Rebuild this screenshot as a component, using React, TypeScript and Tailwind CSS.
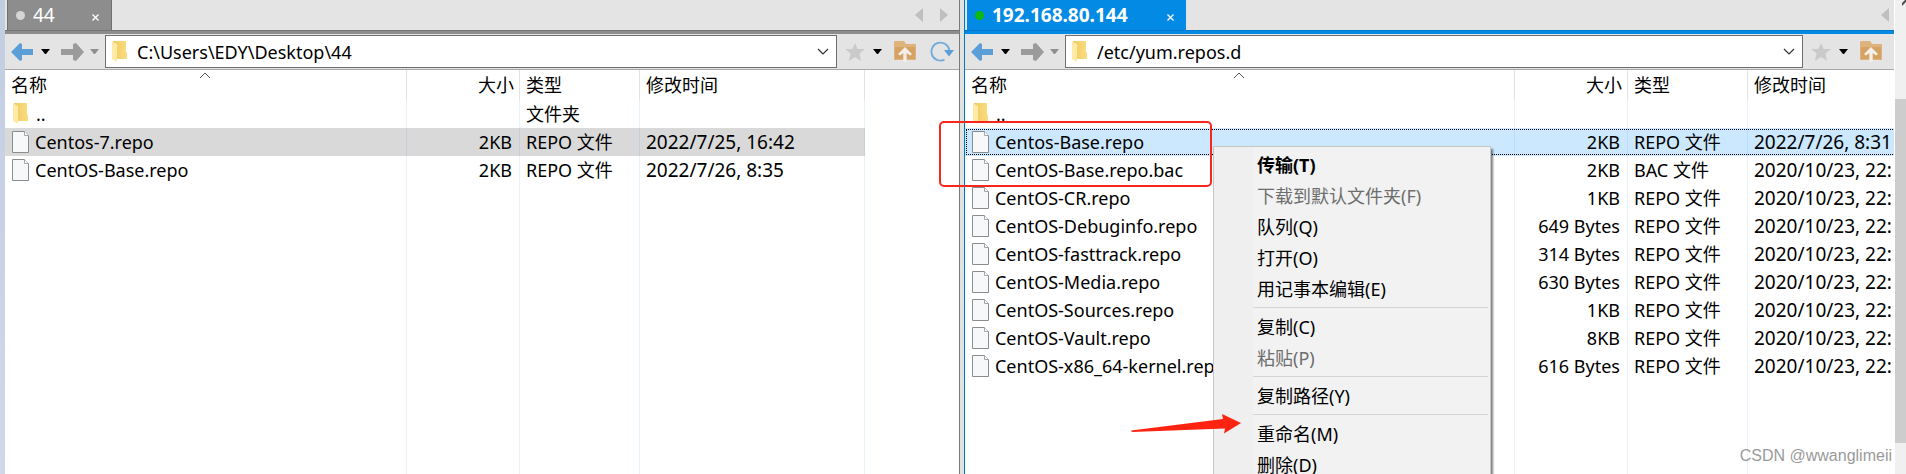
import React from "react";

type FileRow = { name: string; size: string; ext: string; date: string };

const localFiles: FileRow[] = [
  { name: "Centos-7.repo", size: "2KB", ext: "REPO", date: "2022/7/25, 16:42" },
  { name: "CentOS-Base.repo", size: "2KB", ext: "REPO", date: "2022/7/26, 8:35" },
];

const remoteFiles: FileRow[] = [
  { name: "Centos-Base.repo", size: "2KB", ext: "REPO", date: "2022/7/26, 8:31" },
  { name: "CentOS-Base.repo.bac", size: "2KB", ext: "BAC", date: "2020/10/23, 22:" },
  { name: "CentOS-CR.repo", size: "1KB", ext: "REPO", date: "2020/10/23, 22:" },
  { name: "CentOS-Debuginfo.repo", size: "649 Bytes", ext: "REPO", date: "2020/10/23, 22:" },
  { name: "CentOS-fasttrack.repo", size: "314 Bytes", ext: "REPO", date: "2020/10/23, 22:" },
  { name: "CentOS-Media.repo", size: "630 Bytes", ext: "REPO", date: "2020/10/23, 22:" },
  { name: "CentOS-Sources.repo", size: "1KB", ext: "REPO", date: "2020/10/23, 22:" },
  { name: "CentOS-Vault.repo", size: "8KB", ext: "REPO", date: "2020/10/23, 22:" },
  { name: "CentOS-x86_64-kernel.repo", size: "616 Bytes", ext: "REPO", date: "2020/10/23, 22:" },
];

const menuGroups = [
  [
    { label: "传输", hot: "T", bold: true },
    { label: "下载到默认文件夹", hot: "F", disabled: true },
    { label: "队列", hot: "Q" },
    { label: "打开", hot: "O" },
    { label: "用记事本编辑", hot: "E" },
  ],
  [
    { label: "复制", hot: "C" },
    { label: "粘贴", hot: "P", disabled: true },
  ],
  [{ label: "复制路径", hot: "Y" }],
  [
    { label: "重命名", hot: "M" },
    { label: "删除", hot: "D" },
  ],
] as { label: string; hot: string; bold?: boolean; disabled?: boolean }[][];

function Folder() {
  return (
    <svg width="15" height="22" viewBox="0 0 15 22" className="shrink-0" aria-hidden="true">
      <defs>
        <linearGradient id="folderBack" x1="0" x2="1">
          <stop offset="0" stopColor="#eecb62" />
          <stop offset="1" stopColor="#fbdc80" />
        </linearGradient>
      </defs>
      <path d="M1 0H14V11L15 12V18H3Z" fill="url(#folderBack)" />
      <path d="M0 0.5L5 3V21L0 18Z" fill="#ffe9a6" />
    </svg>
  );
}

function Page() {
  return (
    <svg width="17" height="22" viewBox="0 0 17 22" className="shrink-0" aria-hidden="true">
      <path d="M0.5 0.5H12.5L16.5 4.5V21.5H0.5Z" fill="#f7f8f9" stroke="#8a8d8f" />
      <path d="M12.5 0.5V4.5H16.5" fill="#fff" stroke="#a3a6a8" />
    </svg>
  );
}

function Arrow({ forward }: { forward?: boolean }) {
  return (
    <svg width="23" height="18" viewBox="0 0 23 18" aria-hidden="true">
      {forward ? (
        <path d="M0 6H12V1L15 0L23 9L15 18L12 17V12H0Z" fill="#9b9b9b" />
      ) : (
        <path d="M22 6H11V1L9 0L0 9L9 18L11 17V12H22Z" fill="#5c9fd6" />
      )}
    </svg>
  );
}

function Caret({ muted }: { muted?: boolean }) {
  return (
    <svg width="9" height="5" viewBox="0 0 9 5" aria-hidden="true">
      <path d="M0 0H9L5 5H4Z" fill={muted ? "#8f8f8f" : "#000"} />
    </svg>
  );
}

function ScrollArrow({ right }: { right?: boolean }) {
  return (
    <svg width="8" height="14" viewBox="0 0 8 14" aria-hidden="true">
      <path d={right ? "M0 0L8 7L0 14Z" : "M8 0L0 7L8 14Z"} fill="#bfbfbf" />
    </svg>
  );
}

function ToolButton({ label, className, children }: { label: string; className?: string; children: React.ReactNode }) {
  return (
    <button type="button" aria-label={label} className={`flex shrink-0 items-center justify-center ${className ?? ""}`}>
      {children}
    </button>
  );
}

function FileTable({ files, remote }: { files: FileRow[]; remote?: boolean }) {
  const head = "relative h-[30px] border-r border-[#e2e2e2] p-0 font-normal whitespace-nowrap";
  const line = "h-7 overflow-hidden whitespace-nowrap border-r border-[#006ee6]/9 p-0";
  return (
    <table
      className={`h-full table-fixed border-separate border-spacing-0 text-lg leading-7 ${remote ? "w-[calc(100%+8px)]" : "w-full"}`}
    >
      <colgroup>
        <col />
        <col className="w-[113px]" />
        <col className="w-[120px]" />
        <col className={remote ? "w-[154px]" : "w-[225px]"} />
        {!remote && <col className="w-[94px]" />}
      </colgroup>
      <thead>
        <tr>
          <th className={`${head} pl-1.5 text-left`}>
            名称
            <svg width="12" height="7" viewBox="0 0 12 7" className="absolute top-0.5 left-1/2 -translate-x-1/2" aria-hidden="true">
              <path d="M1 6L6 1L11 6" fill="none" stroke="#555" />
            </svg>
          </th>
          <th className={`${head} pr-[5px] text-right`}>大小</th>
          <th className={`${head} pl-1.5 text-left`}>类型</th>
          <th className={`${head} pl-1.5 text-left`}>修改时间</th>
          {!remote && <td />}
        </tr>
      </thead>
      <tbody>
        <tr>
          <td className={line}>
            <div className="flex items-center gap-2 pl-2">
              <Folder />
              <span>..</span>
            </div>
          </td>
          <td className={line} />
          <td className={`${line} pl-1.5`}>{remote ? "" : "文件夹"}</td>
          <td className={line} />
          {!remote && <td />}
        </tr>
        {files.map((file, index) => {
          const fill = index > 0 ? "" : remote ? "bg-[#cce8ff]" : "bg-[#d9d9d9]";
          return (
            <tr
              key={file.name}
              className={index === 0 && remote ? "outline-1 -outline-offset-2 outline-black outline-dotted" : ""}
            >
              <td className={`${line} ${fill}`}>
                <div className="flex items-center gap-1.5 pl-[7px]">
                  <Page />
                  <span>{file.name}</span>
                </div>
              </td>
              <td className={`${line} ${fill} pr-[7px] text-right`}>{file.size}</td>
              <td className={`${line} ${fill} pl-1.5`}>{file.ext} 文件</td>
              <td className={`${line} ${fill} pl-1.5 text-[19px]`}>{file.date}</td>
              {!remote && <td />}
            </tr>
          );
        })}
        <tr className="h-full">
          <td className={line} />
          <td className={line} />
          <td className={line} />
          <td className={line} />
          {!remote && <td />}
        </tr>
      </tbody>
    </table>
  );
}

function Pane({ title, path, files, remote }: { title: string; path: string; files: FileRow[]; remote?: boolean }) {
  return (
    <section className="flex h-full w-full min-w-0 flex-col overflow-hidden">
      <div className="flex h-[30px] shrink-0 items-center justify-between bg-[#e4e4e4] pl-0.5">
        <div
          className={`flex h-full items-center text-[19px] text-white ${
            remote ? "w-[219px] bg-[#038ae4] font-bold" : "w-[105px] border-x border-[#6f6f6f] bg-[#8d8d8d]"
          }`}
        >
          <span className={`ml-2 size-[9px] rounded-full ${remote ? "bg-[#0cb90c]" : "bg-[#d5d5d5]"}`} />
          <span className="ml-2 flex-1 leading-7">{title}</span>
          <button type="button" aria-label="关闭" className="mr-3 pt-1">
            <svg width="7" height="7" viewBox="0 0 7 7" aria-hidden="true">
              <path d="M0.5 0.5L6.5 6.5M6.5 0.5L0.5 6.5" stroke="#fff" strokeWidth="1.3" />
            </svg>
          </button>
        </div>
        <div className={`flex gap-[17px] ${remote ? "pr-[5px]" : "pr-[11px]"}`}>
          <ToolButton label="向左">
            <ScrollArrow />
          </ToolButton>
          {!remote && (
            <ToolButton label="向右">
              <ScrollArrow right />
            </ToolButton>
          )}
        </div>
      </div>
      <div className={`h-1 shrink-0 border-t ${remote ? "border-[#0078c8] bg-[#038ae4]" : "border-[#737373] bg-[#8d8d8d]"}`} />
      <div className="flex h-9 shrink-0 items-center border-b border-[#a8a8a8] bg-[#e4e4e4]">
        <ToolButton label="后退" className="ml-1.5">
          <Arrow />
        </ToolButton>
        <ToolButton label="后退历史" className="ml-[7px]">
          <Caret />
        </ToolButton>
        <ToolButton label="前进" className="ml-[11px]">
          <Arrow forward />
        </ToolButton>
        <ToolButton label="前进历史" className="mr-1.5 ml-1.5">
          <Caret muted />
        </ToolButton>
        <div className="flex h-[33px] min-w-0 flex-1 items-center border border-[#6f6f6f] bg-white pl-1.5">
          <Folder />
          <input
            aria-label={`${title} 路径`}
            defaultValue={path}
            className="ml-2.5 min-w-0 flex-1 bg-transparent text-lg leading-7 outline-none"
          />
          <ToolButton label="展开路径" className="mr-[7px]">
            <svg width="12" height="7" viewBox="0 0 12 7" aria-hidden="true">
              <path d="M1 1L6 6L11 1" fill="none" stroke="#333" strokeWidth="1.2" />
            </svg>
          </ToolButton>
        </div>
        <ToolButton label="收藏" className="ml-2">
          <svg width="20" height="18" viewBox="0 0 20 18" aria-hidden="true">
            <path d="M10 0L12.6 6H20L14.4 10.4L16.2 18L10 14L3.8 18L5.6 10.4L0 6H7.4Z" fill="#cacaca" />
          </svg>
        </ToolButton>
        <ToolButton label="收藏列表" className="ml-2">
          <Caret />
        </ToolButton>
        <ToolButton label="上级目录" className={`ml-3 ${remote ? "mr-3" : ""}`}>
          <svg width="22" height="21" viewBox="0 0 22 21" aria-hidden="true">
            <path d="M0 1L1 0H10L12 3H22V19H0Z" fill="#dfb47c" />
            <path d="M1 6H21V18H1Z" fill="#d5a263" />
            <path d="M11 6L18 13L16 14.5L12.7 12V21H9.3V12L6 14.5L4 13Z" fill="#f4efe8" />
          </svg>
        </ToolButton>
        {!remote && (
          <ToolButton label="刷新" className="mr-[5px] ml-3.5">
            <svg width="24" height="21" viewBox="0 0 24 21" aria-hidden="true">
              <path d="M14.5 18.6A9 9 0 1 1 19.3 9" fill="none" stroke="#6eaadb" strokeWidth="1.8" />
              <path d="M14 9H24L19 15.5Z" fill="#5c9fd6" />
            </svg>
          </ToolButton>
        )}
      </div>
      <div className="min-h-0 flex-1 overflow-hidden bg-white">
        <FileTable files={files} remote={remote} />
      </div>
    </section>
  );
}

function ContextMenu() {
  return (
    <div
      role="menu"
      className="absolute top-[146px] left-[248px] w-[278px] border border-[#c6c6c6] bg-[#f2f2f2] bg-linear-to-r from-[#efefef] from-[39px] to-[#f2f2f2] to-[39px] p-0.5 pb-3 shadow-[2px_3px_2px_rgba(0,0,0,0.5)]"
    >
      {menuGroups.map((group, index) => (
        <div key={index}>
          {index > 0 && <div role="separator" className="my-[3px] ml-[37px] h-px bg-[#d4d4d4]" />}
          {group.map((item) => (
            <button
              key={item.label}
              type="button"
              role="menuitem"
              disabled={item.disabled}
              className={`flex h-[31px] w-full items-center pl-[41px] text-lg leading-7 ${item.bold ? "font-bold" : ""} ${
                item.disabled ? "text-[#6d6d6d]" : "text-black"
              }`}
            >
              {item.label}({item.hot})
            </button>
          ))}
        </div>
      ))}
    </div>
  );
}

export default function App() {
  return (
    <main className="relative flex h-screen overflow-hidden bg-white font-['Noto_Sans','Noto_Sans_CJK_SC',sans-serif] text-black">
      <div className="w-[5px] shrink-0 bg-linear-to-b from-[#c3cde2] to-[#d0d8e9]" />
      <div className="flex min-w-0 flex-[955] border-r border-[#7a7a7a]">
        <Pane title="44" path="C:\Users\EDY\Desktop\44" files={localFiles} />
      </div>
      <div className="w-1 shrink-0 bg-[#e1e3e3]" />
      <div className="relative flex min-w-0 flex-[930] border-l border-[#0078c8]">
        <Pane title="192.168.80.144" path="/etc/yum.repos.d" files={remoteFiles} remote />
        <ContextMenu />
        <div className="pointer-events-none absolute top-[121px] -left-[26px] h-[66px] w-[273px] rounded-[5px] border-2 border-[#f9261c]" />
        <svg width="110" height="20" viewBox="0 0 110 20" className="pointer-events-none absolute top-[414px] left-[166px]" aria-hidden="true">
          <path d="M0 16.5L92 5L91 0L110 9L93 19.5L94 14.5L1 18Z" fill="#ff2412" />
        </svg>
        <div className="pointer-events-none absolute right-0.5 bottom-0 font-['Liberation_Sans',sans-serif] text-base leading-9 text-[#9a9a9a]">
          CSDN @wwanglimeii
        </div>
      </div>
      <div className="flex w-3 shrink-0 flex-col border-l border-white bg-[#f0f0f0]">
        <svg width="11" height="8" viewBox="0 0 11 8" className="shrink-0" aria-hidden="true">
          <path d="M7 6L11 2V-1L7 3Z" fill="#505050" />
        </svg>
        <div className="mt-[91px] mb-[31px] flex-1 bg-[#cdcdcd]" />
      </div>
    </main>
  );
}
